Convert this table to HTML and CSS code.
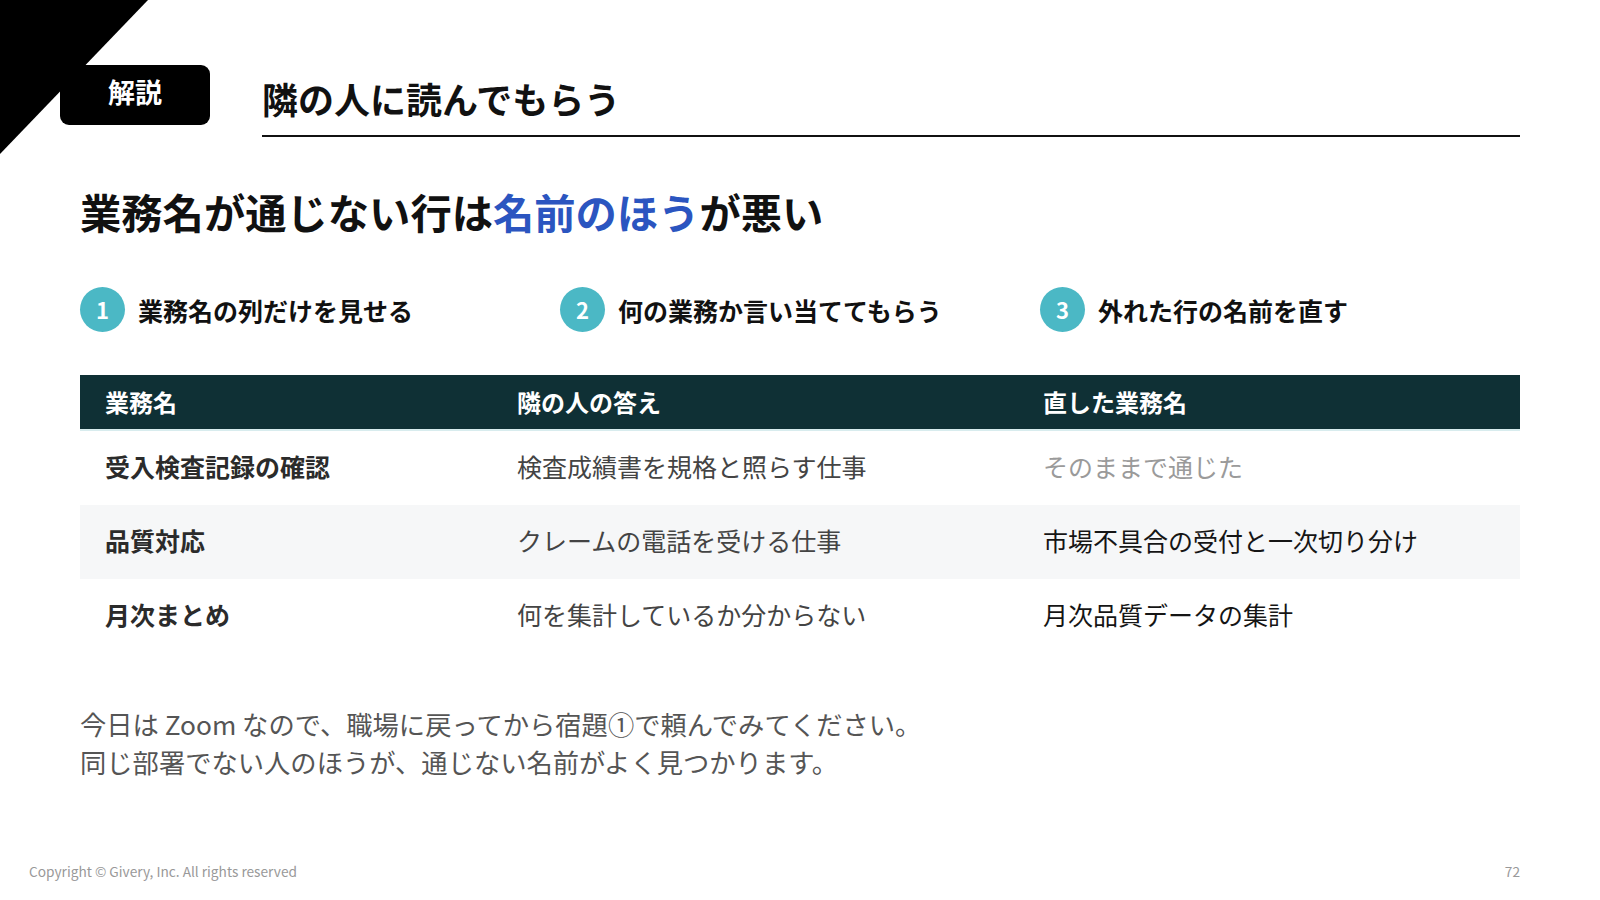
FILE: index.html
```html
<!DOCTYPE html>
<html lang="ja">
<head>
<meta charset="utf-8">
<title>隣の人に読んでもらう</title>
<link rel="stylesheet" href="styles.css">
</head>
<body>
<div class="slide">
  <div class="corner"></div>
  <header class="top">
    <div class="badge">解説</div>
    <div class="title-wrap"><h1 class="title">隣の人に読んでもらう</h1></div>
  </header>

  <h2 class="headline">業務名が通じない行は<span class="accent">名前のほう</span>が悪い</h2>

  <ol class="steps">
    <li class="step"><span class="num">1</span><span class="step-text">業務名の列だけを見せる</span></li>
    <li class="step"><span class="num">2</span><span class="step-text">何の業務か言い当ててもらう</span></li>
    <li class="step"><span class="num">3</span><span class="step-text">外れた行の名前を直す</span></li>
  </ol>

  <div class="table">
    <div class="row head">
      <div class="cell">業務名</div>
      <div class="cell">隣の人の答え</div>
      <div class="cell">直した業務名</div>
    </div>
    <div class="row">
      <div class="cell name">受入検査記録の確認</div>
      <div class="cell answer">検査成績書を規格と照らす仕事</div>
      <div class="cell fixed muted">そのままで通じた</div>
    </div>
    <div class="row alt">
      <div class="cell name">品質対応</div>
      <div class="cell answer">クレームの電話を受ける仕事</div>
      <div class="cell fixed">市場不具合の受付と一次切り分け</div>
    </div>
    <div class="row">
      <div class="cell name">月次まとめ</div>
      <div class="cell answer">何を集計しているか分からない</div>
      <div class="cell fixed">月次品質データの集計</div>
    </div>
  </div>

  <p class="note">今日は Zoom なので、職場に戻ってから宿題①で頼んでみてください。<br>同じ部署でない人のほうが、通じない名前がよく見つかります。</p>

  <footer class="foot">
    <span class="copy">Copyright © Givery, Inc. All rights reserved</span>
    <span class="page">72</span>
  </footer>
</div>
</body>
</html>
```

FILE: styles.css
```css
* { box-sizing: border-box; }
html, body { margin: 0; padding: 0; background: #fff; }
body {
  font-family: "Noto Sans CJK JP", "Noto Sans", sans-serif;
  color: #111;
}
.slide {
  position: relative;
  width: 1600px;
  height: 900px;
  overflow: hidden;
  display: flex;
  flex-direction: column;
  background: #fff;
}
.corner {
  position: absolute;
  left: 0;
  top: 0;
  width: 148px;
  height: 154px;
  background: #000;
  clip-path: polygon(0 0, 100% 0, 0 100%);
}
.top {
  position: relative;
  display: flex;
  align-items: flex-start;
  padding: 65px 80px 0 60px;
}
.badge {
  width: 150px;
  height: 60px;
  background: #000;
  color: #fff;
  border-radius: 9px;
  font-weight: 700;
  font-size: 27px;
  line-height: 54px;
  padding-bottom: 6px;
  text-align: center;
}
.title-wrap {
  flex: 1;
  margin-left: 52px;
  border-bottom: 2px solid #111;
  padding: 15px 0 19px;
}
.title {
  margin: 0;
  font-size: 36px;
  line-height: 36px;
  font-weight: 700;
  color: #111;
}
.headline {
  margin: 53px 0 0 80px;
  font-size: 41.3px;
  line-height: 42px;
  font-weight: 700;
  color: #111;
}
.accent { color: #2b55c0; }
.steps {
  list-style: none;
  margin: 55px 80px 0;
  padding: 0;
  display: grid;
  grid-template-columns: repeat(3, 1fr);
}
.step {
  display: flex;
  align-items: center;
  gap: 13px;
}
.num {
  width: 45px;
  height: 45px;
  border-radius: 50%;
  background: #4bb8c5;
  color: #fff;
  font-weight: 700;
  font-size: 22px;
  line-height: 45px;
  text-align: center;
  flex: none;
}
.step-text {
  font-size: 25px;
  font-weight: 700;
  color: #111;
}
.table {
  margin: 43px 80px 0;
}
.row {
  display: grid;
  grid-template-columns: 412px 526px 1fr;
  height: 74px;
  align-items: center;
  padding-bottom: 5px;
}
.row.head {
  height: 56px;
  padding-bottom: 0;
  background: #0f3035;
  border-bottom: 2px solid #d8ecee;
  color: #fff;
  font-weight: 700;
}
.row.alt { background: #f6f7f8; }
.cell {
  padding-left: 25px;
  font-size: 25px;
  line-height: 1.2;
}
.row.head .cell { font-size: 24px; }
.cell.name { font-weight: 700; color: #2b2b2b; }
.cell.answer { color: #444; }
.cell.fixed { color: #151515; }
.cell.muted { color: #9a9a9a; }
.note {
  margin: 52px 0 0 80px;
  font-size: 26.3px;
  line-height: 38px;
  color: #555;
}
.foot {
  margin-top: auto;
  display: flex;
  justify-content: space-between;
  align-items: center;
  padding: 0 80px 20px 29px;
  font-size: 13.7px;
  line-height: 18px;
  color: #999;
}
```
